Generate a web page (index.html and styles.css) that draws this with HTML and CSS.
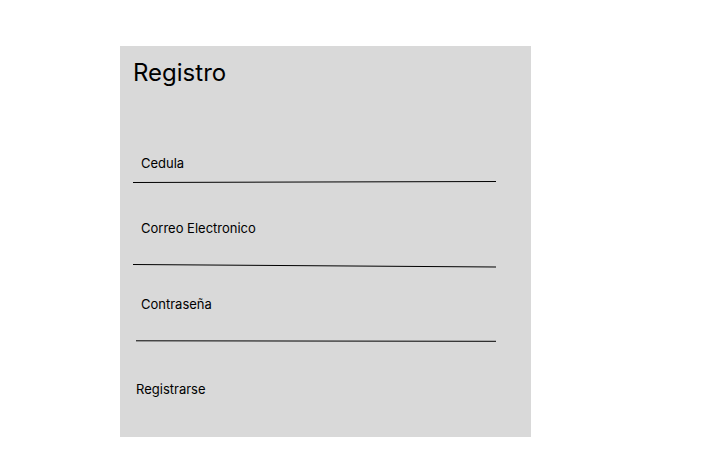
FILE: index.html
```html
<!DOCTYPE html>
<html lang="es">
<head>
<meta charset="utf-8">
<title>Registro</title>
<link rel="stylesheet" href="styles.css">
</head>
<body>
<main class="page">
  <section class="panel">
    <h1 class="title">Registro</h1>
    <div class="field field-cedula">
      <label class="label">Cedula</label>
      <svg class="rule" width="363" height="4" viewBox="0 0 363 4"><line x1="0" y1="2.5" x2="363" y2="1.5" stroke="#000" stroke-width="1"/></svg>
    </div>
    <div class="field field-correo">
      <label class="label">Correo Electronico</label>
      <svg class="rule" width="363" height="5" viewBox="0 0 363 5"><line x1="0" y1="1.5" x2="363" y2="4" stroke="#000" stroke-width="1"/></svg>
    </div>
    <div class="field field-pass">
      <label class="label">Contraseña</label>
      <svg class="rule rule-short" width="360" height="4" viewBox="0 0 360 4"><line x1="0" y1="1.8" x2="360" y2="2.3" stroke="#000" stroke-width="1"/></svg>
    </div>
    <div class="action">Registrarse</div>
  </section>
</main>
</body>
</html>
```

FILE: styles.css
```css
html, body {
  margin: 0;
  padding: 0;
  background: #ffffff;
}

body {
  font-family: Inter, "Noto Sans", "Liberation Sans", sans-serif;
  color: #000;
}

.page {
  padding: 46px 0 0 120px;
}

.panel {
  box-sizing: border-box;
  width: 411px;
  height: 391px;
  background: #d9d9d9;
  padding: 12px 0 0 13px;
  display: flex;
  flex-direction: column;
  align-items: flex-start;
}

.title {
  margin: 0;
  font-size: 24px;
  line-height: 29px;
  font-weight: 400;
}

.field {
  display: flex;
  flex-direction: column;
  align-items: flex-start;
}

.label {
  display: block;
  margin-left: 8px;
  padding-top: 1px;
  font-size: 13px;
  line-height: 16px;
}

.rule {
  display: block;
}

.field-cedula {
  margin-top: 67px;
}
.field-cedula .rule {
  margin-top: 9px;
}

.field-correo {
  margin-top: 35px;
}
.field-correo .rule {
  margin-top: 27px;
}

.field-pass {
  margin-top: 27px;
}
.field-pass .rule {
  margin-top: 27px;
  margin-left: 3px;
}

.action {
  margin-top: 38px;
  margin-left: 3px;
  font-size: 13px;
  line-height: 16px;
}
```
